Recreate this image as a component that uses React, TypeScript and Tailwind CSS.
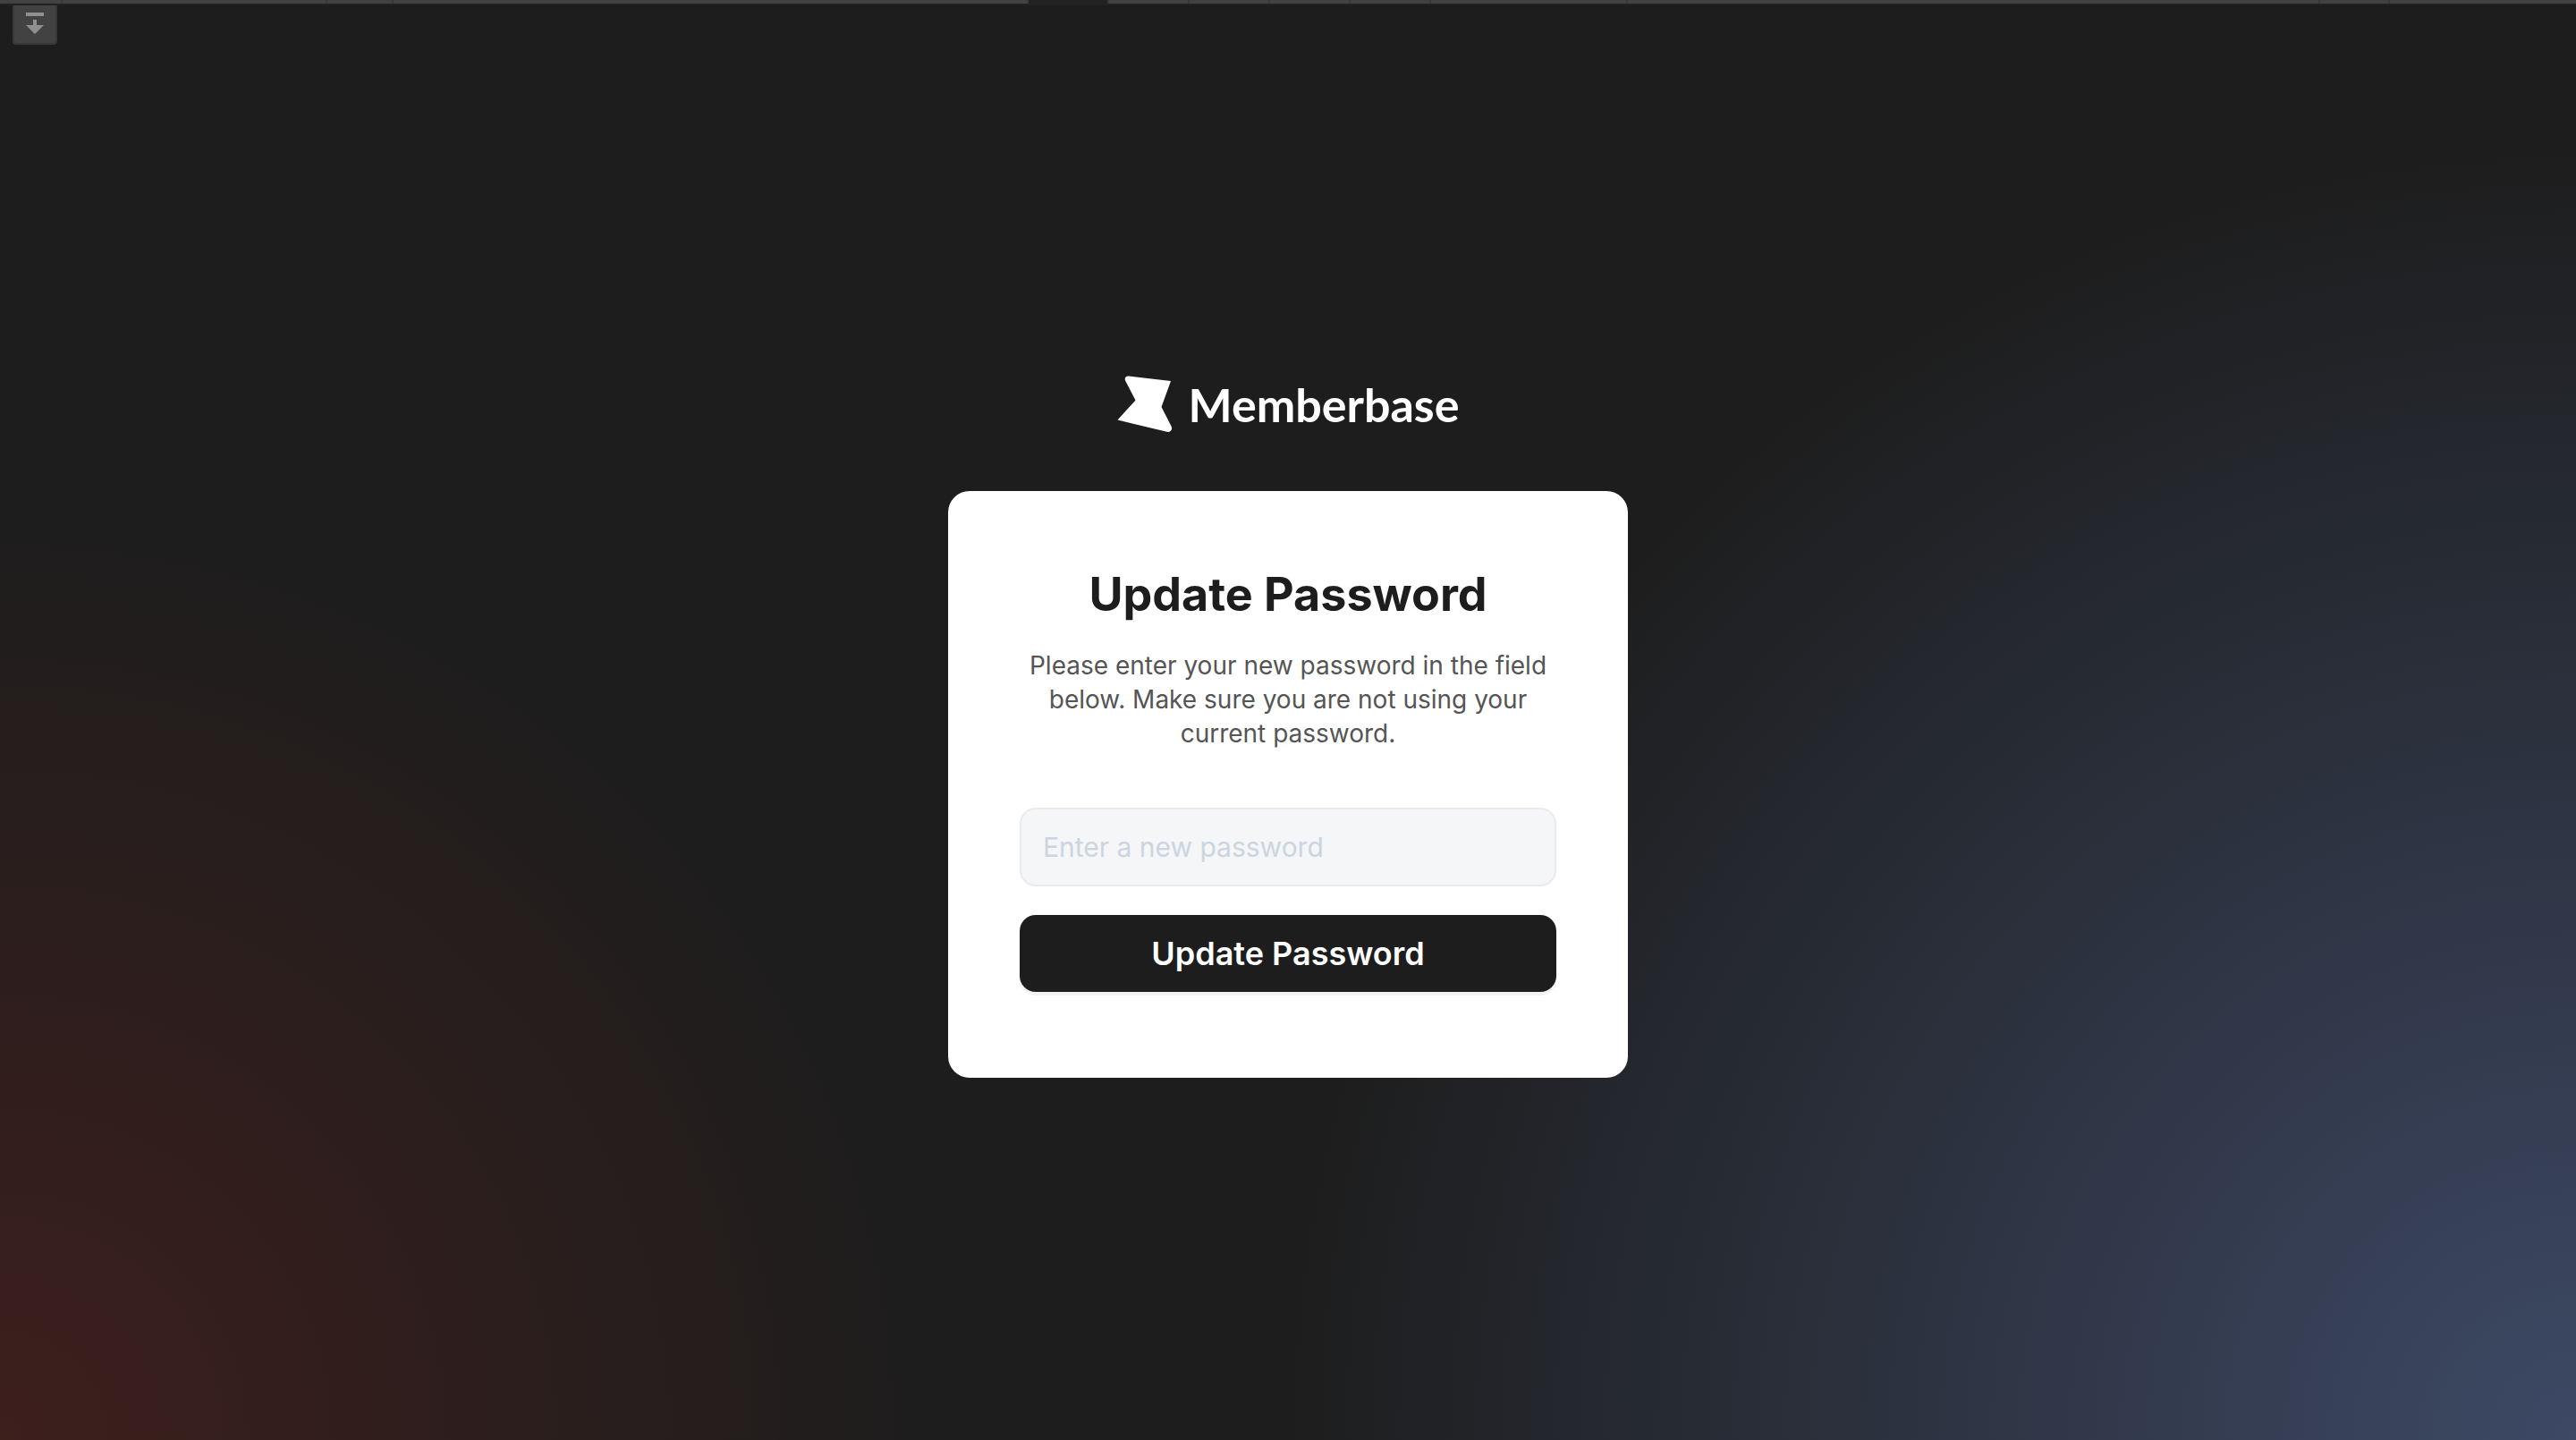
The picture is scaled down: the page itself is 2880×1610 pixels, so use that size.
const leftTabs = ['w-[68px]', 'w-[294px]', 'w-[72px]', 'flex-1'];
const rightTabs = ['w-[88px]', 'w-[88px]', 'w-[88px]', 'w-[88px]', 'w-[218px]', 'w-[772px]', 'w-[76px]', 'flex-1'];

function Tabs({ widths }: { widths: string[] }) {
  return (
    <>
      {widths.map((w, i) => (
        <span key={i} className={`${w} h-full bg-[#424242]`} />
      ))}
    </>
  );
}

function TopStrip() {
  return (
    <div className="flex h-[6px] w-full border-b-2 border-[#222222] bg-[#222222]">
      <div className="flex flex-[1150] gap-[2px] bg-[#393939] pr-[2px]">
        <Tabs widths={leftTabs} />
      </div>
      <div className="flex-[88]" />
      <div className="flex flex-[1642] gap-[2px] bg-[#393939] pl-[2px]">
        <Tabs widths={rightTabs} />
      </div>
    </div>
  );
}

function Logo() {
  return (
    <div className="flex items-center gap-[18px] text-white">
      <svg width="62" height="66" viewBox="0 0 62 66" fill="currentColor" aria-hidden="true">
        <path d="M13 1.600 L60 7 L49.500 36 L60.500 57.500 C62.500 61.500 59.500 64.600 55.500 63.800 L0.500 50.500 L20.500 28.500 L9.200 6.800 C7.800 3.800 9.500 1.300 13 1.600 Z" />
      </svg>
      <span className="font-['Lato',sans-serif] text-[52px] leading-[66px] font-bold">Memberbase</span>
    </div>
  );
}

export default function App() {
  return (
    <div className="relative flex min-h-screen flex-col bg-[#1d1d1d] bg-[radial-gradient(circle_1050px_at_0%_100%,#3d1f1c,rgba(61,31,28,0)),radial-gradient(circle_1450px_at_100%_100%,#3d4965,#1d1d1d)] font-['Inter',sans-serif]">
      <TopStrip />
      <button
        type="button"
        aria-label="Dock panel"
        className="absolute top-[6px] left-[14px] flex h-11 w-[50px] justify-center rounded-b border-2 border-t-0 border-[#383838] bg-[#424242] pt-2"
      >
        <svg width="20" height="24" viewBox="0 0 20 24" fill="#909090" aria-hidden="true">
          <path d="M0 0h20v4H0zM8 8h4v6h8L10 24 0 14h8z" />
        </svg>
      </button>
      <main className="flex flex-1 flex-col items-center justify-center gap-16 pt-2">
        <Logo />
        <section className="w-full max-w-[760px] rounded-3xl bg-white px-20 pt-20 pb-24 text-center">
          <h1 className="text-[52px] leading-[72px] font-bold text-[#1d1d1d]">Update Password</h1>
          <p className="mt-6 text-[28px] leading-[38px] text-[#555555]">
            Please enter your new password in the field below. Make sure you are not using your current password.
          </p>
          <form className="mt-16 flex flex-col gap-8" onSubmit={(e) => e.preventDefault()}>
            <input
              type="password"
              aria-label="New password"
              placeholder="Enter a new password"
              className="h-[88px] rounded-[18px] border-2 border-[#e8ecf1] bg-[#f4f6f8] px-6 text-[30px] text-[#1d1d1d] placeholder:text-[#cbd5e0]"
            />
            <button
              type="submit"
              className="h-[86px] rounded-[18px] bg-[#1d1d1d] text-[36px] font-semibold text-white shadow-[0_4px_0_#f3f3f3]"
            >
              Update Password
            </button>
          </form>
        </section>
      </main>
    </div>
  );
}
